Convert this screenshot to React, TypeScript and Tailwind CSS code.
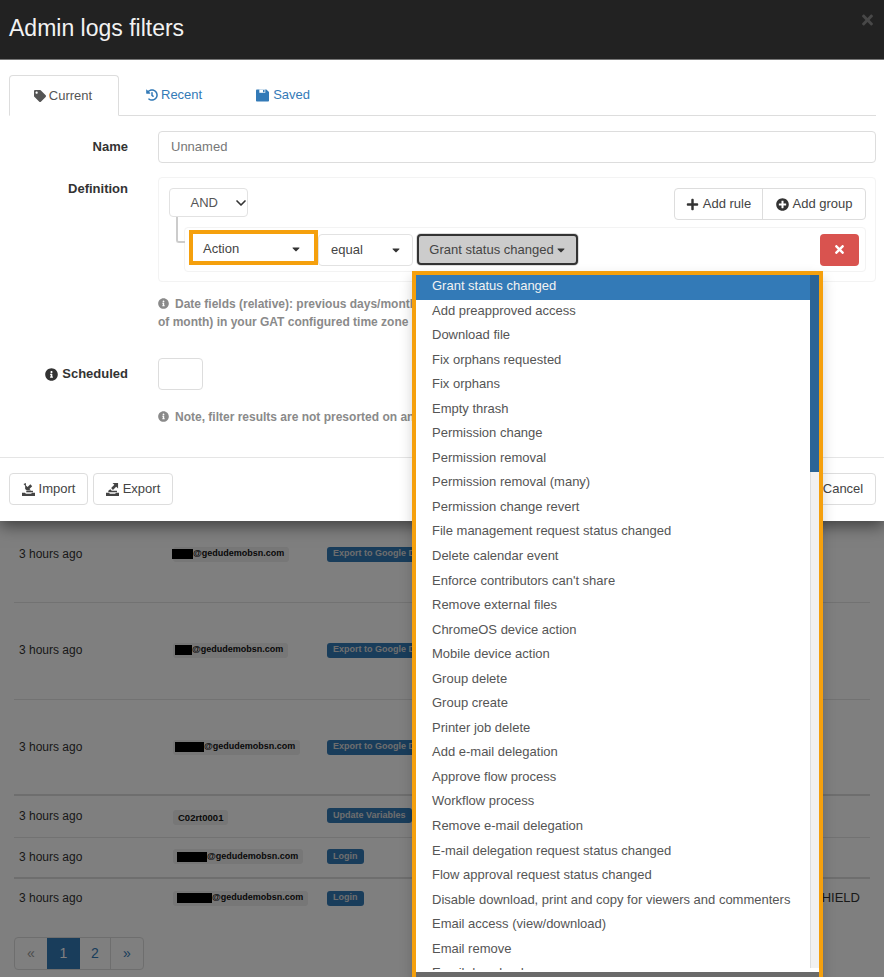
import { FaTag, FaHistory, FaPlus, FaPlusCircle, FaTimes, FaInfoCircle, FaCaretDown } from 'react-icons/fa';
import { ChevronDown } from 'lucide-react';

const actions = [
  'Grant status changed',
  'Add preapproved access',
  'Download file',
  'Fix orphans requested',
  'Fix orphans',
  'Empty thrash',
  'Permission change',
  'Permission removal',
  'Permission removal (many)',
  'Permission change revert',
  'File management request status changed',
  'Delete calendar event',
  "Enforce contributors can't share",
  'Remove external files',
  'ChromeOS device action',
  'Mobile device action',
  'Group delete',
  'Group create',
  'Printer job delete',
  'Add e-mail delegation',
  'Approve flow process',
  'Workflow process',
  'Remove e-mail delegation',
  'E-mail delegation request status changed',
  'Flow approval request status changed',
  'Disable download, print and copy for viewers and commenters',
  'Email access (view/download)',
  'Email remove',
  'Email download',
];

const rows = [
  { h: 'h-[97px]', redact: 'w-[21px] -ml-px', rest: '@gedudemobsn.com', action: 'Export to Google Drive', border: 'border-[#e4e4e4]' },
  { h: 'h-[97px] pb-[2px]', redact: 'w-[17px] ml-[2px]', rest: '@gedudemobsn.com', action: 'Export to Google Drive', border: 'border-[#e4e4e4]' },
  { h: 'h-[96px]', redact: 'w-[29px] ml-[2px]', rest: '@gedudemobsn.com', action: 'Export to Google Drive', border: 'border-[#dcdcdc] border-b-2' },
  { h: 'h-[42px] pb-[2px]', redact: '', rest: 'C02rt0001', action: 'Update Variables', border: 'border-[#e4e4e4]' },
  { h: 'h-[41px] pb-[2px]', redact: 'w-[30px] ml-[4px]', rest: '@gedudemobsn.com', action: 'Login', border: 'border-[#dcdcdc] border-b-2' },
  { h: 'h-[41px] pb-[2px]', redact: 'w-[35px] ml-[4px]', rest: '@gedudemobsn.com', action: 'Login', border: 'border-transparent' },
];

function ImportIcon() {
  return (
    <svg viewBox="0 0 14 14" className="h-[13px] w-[13px] fill-current">
      <path d="M0 10.5h3.2l1 1h5.6l1-1H14V14H0z" />
      <path d="M1.6 1 4.2 0v2.6L6 4.4l3-3 2 2-3 3 1.8 1.8H5.2L3.4 6.4V3z" />
      <path d="M4.6 8.4h7.2v1.6H4.6z" />
    </svg>
  );
}

function ExportIcon() {
  return (
    <svg viewBox="0 0 14 14" className="h-[13px] w-[13px] fill-current">
      <path d="M0 10.5h3.2l1 1h5.6l1-1H14V14H0z" />
      <path d="M7 0h6v6l-2-2-3.5 3.5-2-2L9 2z" />
      <path d="M2.5 8.4 4.6 6.6l1.6 1.8h5.6V10H2.5z" />
    </svg>
  );
}

function FloppyIcon() {
  return (
    <svg viewBox="0 0 14 13" className="h-[13px] w-[13px]">
      <path className="fill-current" d="M0 .8C0 .4.4 0 .8 0h10.4L14 2.6v9.6c0 .4-.4.8-.8.8H.8c-.4 0-.8-.4-.8-.8z" />
      <path className="fill-white" d="M3.6 0h6.4v3.6H3.6z" />
      <path className="fill-current" d="M7.6.6h1.6v2.4H7.6z" />
    </svg>
  );
}

function Hint({ children }: { children: React.ReactNode }) {
  return (
    <div className="whitespace-nowrap text-[12px] leading-[18px] font-bold text-[#8a8a8a]">
      {children}
    </div>
  );
}

export default function App() {
  return (
    <div className="relative h-[977px] w-[884px] overflow-hidden bg-white font-['Liberation_Sans',Arial,sans-serif] text-[#333]">
      {/* Log table behind the modal */}
      <div className="px-[14px] pt-[506px]">
        {rows.map((r, i) => (
          <div key={i} className={`flex items-center border-b ${r.h} ${r.border}`}>
            <div className="w-[159px] pl-[5px] text-[12px]">3 hours ago</div>
            <div className="w-[154px]">
              {r.redact ? (
                <span className="inline-flex h-[15px] items-center rounded-[3px] bg-[#eee] pr-[5px] text-[9px] font-bold whitespace-nowrap text-[#111]">
                  <span className={`h-[10px] bg-black ${r.redact}`} />
                  {r.rest}
                </span>
              ) : (
                <span className="inline-flex h-[15px] items-center rounded-[3px] bg-[#eee] px-[5px] text-[9.5px] font-bold whitespace-nowrap text-[#111]">
                  {r.rest}
                </span>
              )}
            </div>
            <span className="flex h-[15px] items-center rounded-[3px] bg-[#337ab7] px-[6px] text-[9px] font-bold whitespace-nowrap text-[#ddd]">
              {r.action}
            </span>
            {i === 5 && <span className="mr-[10px] ml-auto text-[13px]">SHIELD</span>}
          </div>
        ))}
        <div className="mt-[17px] inline-flex h-[33px] rounded border border-[#ddd] text-[14px] text-[#337ab7]">
          <span className="flex w-[32px] items-center justify-center text-[#999]">«</span>
          <span className="flex w-[33px] items-center justify-center bg-[#337ab7] text-white">1</span>
          <span className="flex w-[31px] items-center justify-center border-r border-[#ddd]">2</span>
          <span className="flex w-[32px] items-center justify-center">»</span>
        </div>
      </div>

      {/* Backdrop */}
      <div className="absolute inset-0 bg-black/50" />

      {/* Modal */}
      <div className="absolute inset-x-0 top-0 bg-white shadow-[0_5px_15px_rgba(0,0,0,0.5)]">
        <div className="flex h-[60px] items-center justify-between border-b border-[#777] bg-[#222] pr-[9px] pl-[9px]">
          <h1 className="mb-[3px] text-[23px] text-[#f2f2f2]">Admin logs filters</h1>
          <FaTimes className="mb-[20px] h-[16px] w-[15px] text-[#484848]" />
        </div>

        <div className="px-[8px]">
          <div className="mt-[15px] ml-px flex h-[41px] border-b border-[#ddd] text-[13px]">
            <div className="flex h-[41px] w-[110px] items-center justify-center gap-[3px] rounded-t border border-[#ddd] border-b-white bg-white pr-[2px] text-[#555]">
              <FaTag className="h-[12px] w-[12px] text-[#555]" />
              Current
            </div>
            <div className="ml-[27px] flex items-center gap-[3px] text-[#337ab7]">
              <FaHistory className="h-[12px] w-[12px]" />
              Recent
            </div>
            <div className="ml-[54px] flex items-center gap-[4px] text-[#337ab7]">
              <FloppyIcon />
              Saved
            </div>
          </div>

          <div className="mt-[15px] grid grid-cols-[120px_1fr] gap-x-[30px]">
            <label className="pt-[6px] text-right text-[13px] font-bold">Name</label>
            <div className="flex h-[32px] items-center rounded border border-[#ddd] px-[12px] text-[13px] text-[#777]">
              Unnamed
            </div>

            <label className="mt-[14px] pt-[2px] text-right text-[13px] font-bold">Definition</label>
            <div className="mt-[14px] flex h-[105px] flex-col rounded border border-[#f3f3f3] pt-[10px] pr-[9px] pl-[10px]">
              <div className="flex justify-between">
                <div className="flex h-[29px] w-[79px] items-center justify-end gap-[15px] rounded border border-[#e2e2e2] text-[13px] text-[#555]">
                  AND
                  <ChevronDown className="-mr-[2px] h-[16px] w-[16px] shrink-0 text-[#333]" strokeWidth={2.5} />
                </div>
                <div className="flex h-[32px] rounded border border-[#ddd] text-[13px] text-[#444]">
                  <div className="flex w-[88px] items-center justify-center gap-[4px] border-r border-[#ddd]">
                    <FaPlus className="h-[13px] w-[13px] text-[#333]" />
                    Add rule
                  </div>
                  <div className="flex w-[102px] items-center justify-center gap-[4px]">
                    <FaPlusCircle className="h-[13px] w-[13px] text-[#333]" />
                    Add group
                  </div>
                </div>
              </div>

              <div className="relative mt-[7px] ml-[15px] flex h-[45px] items-center rounded border border-[#f3f3f3] pr-[6px] pl-[4px]">
                <span className="absolute -top-[11px] -left-[9px] h-[26px] w-[9px] rounded-bl-[3px] border-b-2 border-l-2 border-[#ccc]" />
                <div className="mb-[4px] flex h-[35px] w-[129px] items-center justify-between border-4 border-[#f5a00d] pt-[3px] pr-[13px] pl-[10px] text-[13px] text-[#444]">
                  Action
                  <FaCaretDown className="h-[12px] w-[10px] text-[#333]" />
                </div>
                <div className="flex h-[32px] w-[95px] items-center justify-between rounded border border-[#e2e2e2] pr-[11px] pl-[12px] text-[13px] text-[#444]">
                  equal
                  <FaCaretDown className="h-[12px] w-[10px] text-[#333]" />
                </div>
                <div className="ml-[4px] flex h-[31px] w-[161px] items-center justify-center gap-[3px] rounded border-2 border-[#333] bg-[#ccc] pr-[1px] text-[13px] text-[#444] ring-1 ring-[#ddd]">
                  Grant status changed
                  <FaCaretDown className="h-[12px] w-[8px] text-[#333]" />
                </div>
                <div className="ml-auto flex h-[32px] w-[39px] items-center justify-center rounded bg-[#d9534f]">
                  <FaTimes className="h-[13px] w-[11px] text-white" />
                </div>
              </div>
            </div>

            <div className="col-start-2 mt-[13px]">
              <Hint>
                <FaInfoCircle className="mr-[6px] inline h-[11px] w-[11px] align-[-1px]" />
                Date fields (relative): previous days/months
                <br />
                of month) in your GAT configured time zone
              </Hint>
            </div>

            <label className="mt-[27px] flex items-center justify-end gap-[4px] text-[13px] font-bold">
              <FaInfoCircle className="h-[13px] w-[13px]" />
              Scheduled
            </label>
            <div className="mt-[27px] h-[32px] w-[45px] rounded border border-[#ddd]" />

            <div className="col-start-2 mt-[18px]">
              <Hint>
                <FaInfoCircle className="mr-[6px] inline h-[11px] w-[11px] align-[-1px]" />
                Note, filter results are not presorted on any
              </Hint>
            </div>
          </div>
        </div>

        <div className="mt-[31px] flex justify-between border-t border-[#e5e5e5] px-[8px] pt-[15px] pb-[16px] text-[13px] text-[#444]">
          <div className="ml-px flex gap-[5px]">
            <div className="flex h-[32px] w-[79px] items-center justify-center gap-[4px] rounded border border-[#ddd]">
              <ImportIcon />
              Import
            </div>
            <div className="flex h-[32px] w-[80px] items-center justify-center gap-[4px] rounded border border-[#ddd]">
              <ExportIcon />
              Export
            </div>
          </div>
          <div className="flex h-[32px] w-[66px] items-center justify-center rounded border border-[#ddd]">Cancel</div>
        </div>
      </div>

      {/* Open value dropdown */}
      <div className="absolute top-[271px] left-[412px] h-[710px] w-[411px] border-4 border-[#f5a00d] bg-[#6a6a6a] shadow-[0_6px_12px_rgba(0,0,0,0.18)]">
        <div className="flex h-[697px] bg-white">
          <div className="h-[695px] min-w-0 flex-1 overflow-hidden">
            {actions.map((a, i) => (
              <div
                key={a}
                className={`h-[24.55px] pl-[16px] text-[13px] leading-[22px] whitespace-nowrap ${i === 0 ? 'bg-[#337ab7] text-[#f2f2f2]' : 'text-[#555]'}`}
              >
                {a}
              </div>
            ))}
          </div>
          <div className="h-[693px] w-[9px] border-l border-[#ddd] bg-[#f1f1f1]">
            <div className="-ml-px h-[197px] w-[9px] bg-[#2a6496]" />
          </div>
        </div>
      </div>
    </div>
  );
}
